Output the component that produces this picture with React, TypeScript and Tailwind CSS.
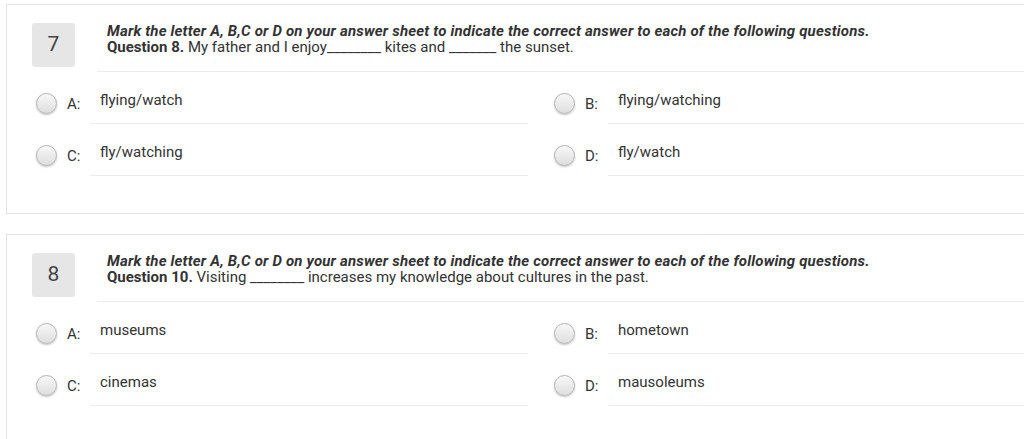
import React from 'react';

type Option = { key: string; text: string };

interface QuestionProps {
  index: number;
  label: string;
  body: string;
  options: Option[];
}

const INSTRUCTION =
  'Mark the letter A, B,C or D on your answer sheet to indicate the correct answer to each of the following questions.';

const Radio = () => (
  <div className="mt-[21px] w-[21px] h-[21px] shrink-0 rounded-full border border-[#b4b4b4] bg-gradient-to-b from-[#f8f8f8] to-[#dedede] shadow-[0_1px_2px_rgba(0,0,0,0.25)]" />
);

const OptionCell = ({ option }: { option: Option }) => (
  <div className="flex items-start pl-[4px] pr-[22px]">
    <Radio />
    <span className="ml-[10px] w-[23px] pt-[24px] text-[15px] leading-[16px] text-[#333]">{option.key}:</span>
    <div className="flex-1 h-[52px] border-b border-[#ececec] pl-[10px] pt-[20px] text-[15px] leading-[16px] text-[#333]">
      {option.text}
    </div>
  </div>
);

const QuestionCard = ({ index, label, body, options }: QuestionProps) => (
  <div className="w-[1080px] border border-[#e3e3e3] bg-white pl-[25px] pt-[18px] pb-[37px]">
    {/* header */}
    <div className="flex items-start">
      <div className="w-[43px] h-[44px] shrink-0 rounded-[3px] bg-[#e6e6e6] flex items-center justify-center text-[21px] text-[#444]">
        {index}
      </div>
      <div className="flex-1 ml-[22px] pl-[10px] pb-[16px] border-b border-[#ececec] text-[15px] leading-[16px] text-[#333]">
        <div className="font-bold italic tracking-[0.18px]">{INSTRUCTION}</div>
        <div>
          <span className="font-bold">{label}</span> {body}
        </div>
      </div>
    </div>

    {/* answers */}
    <div className="grid grid-cols-[518px_518px]">
      {options.map((o) => (
        <OptionCell key={o.key} option={o} />
      ))}
    </div>
  </div>
);

export default function App() {
  return (
    <div
      className="w-[1024px] h-[439px] overflow-hidden bg-white pl-[6px] pt-[4px] flex flex-col gap-[20px]"
      style={{ fontFamily: 'Roboto, "Liberation Sans", sans-serif' }}
    >
      <QuestionCard
        index={7}
        label="Question 8."
        body="My father and I enjoy________ kites and _______ the sunset."
        options={[
          { key: 'A', text: 'flying/watch' },
          { key: 'B', text: 'flying/watching' },
          { key: 'C', text: 'fly/watching' },
          { key: 'D', text: 'fly/watch' },
        ]}
      />
      <QuestionCard
        index={8}
        label="Question 10."
        body="Visiting ________ increases my knowledge about cultures in the past."
        options={[
          { key: 'A', text: 'museums' },
          { key: 'B', text: 'hometown' },
          { key: 'C', text: 'cinemas' },
          { key: 'D', text: 'mausoleums' },
        ]}
      />
    </div>
  );
}
